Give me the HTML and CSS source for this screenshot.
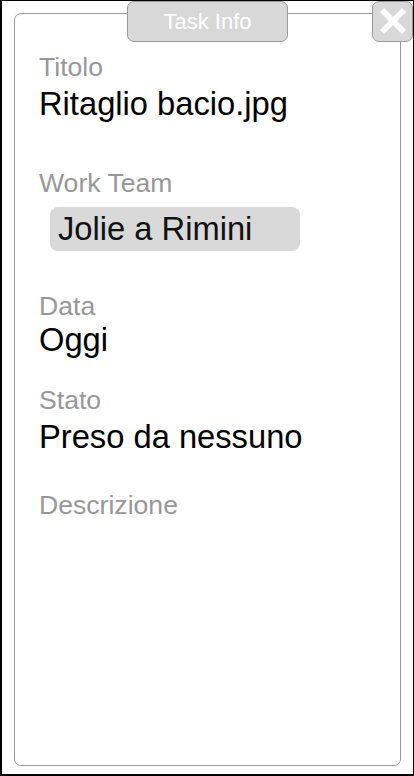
FILE: index.html
```html
<!DOCTYPE html>
<html lang="it">
<head>
<meta charset="utf-8">
<title>Task Info</title>
<link rel="stylesheet" href="styles.css">
</head>
<body>
<div class="frame">
  <div class="panel">
    <div class="label label-first">Titolo</div>
    <div class="value">Ritaglio bacio.jpg</div>

    <div class="label label-team">Work Team</div>
    <div class="chip">Jolie a Rimini</div>

    <div class="label label-data">Data</div>
    <div class="value value-tight">Oggi</div>

    <div class="label label-stato">Stato</div>
    <div class="value">Preso da nessuno</div>

    <div class="label label-desc">Descrizione</div>
  </div>
  <div class="tab">Task Info</div>
  <button class="close" type="button" aria-label="Chiudi">
    <svg width="39" height="39" viewBox="0 0 39 39" aria-hidden="true">
      <path d="M9 8 L31 30 M31 8 L9 30" stroke="#ffffff" stroke-width="6" fill="none"/>
    </svg>
  </button>
</div>
</body>
</html>
```

FILE: styles.css
```css
html, body {
  margin: 0;
  padding: 0;
  background: #ffffff;
}

body {
  font-family: "Liberation Sans", Arial, Helvetica, sans-serif;
}

.frame {
  position: relative;
  box-sizing: border-box;
  width: 414px;
  height: 776px;
  border-style: solid;
  border-color: #000000;
  border-width: 1px 1px 2px 2px;
  padding: 12px 12px 8px 12px;
}

.panel {
  box-sizing: border-box;
  height: 100%;
  border: 1px solid #9a9a9a;
  border-radius: 7px;
  padding: 38px 20px 0 24px;
}

.label {
  font-size: 26.6px;
  line-height: 30px;
  color: #989898;
}

.label-team { margin-top: 45px; }
.label-data { margin-top: 40px; }
.label-stato { margin-top: 26px; }
.label-desc { margin-top: 34px; }

.value {
  margin-top: 3px;
  font-size: 32.7px;
  line-height: 38px;
  color: #000000;
}

.value-tight { margin-top: 0; }

.chip {
  box-sizing: border-box;
  width: 250px;
  height: 44px;
  margin: 9px 0 0 11px;
  padding-left: 8px;
  border-radius: 8px;
  background: #d9d9d9;
  font-size: 32.7px;
  line-height: 44px;
  color: #111111;
}

.tab {
  position: absolute;
  top: 0;
  left: 125px;
  box-sizing: border-box;
  width: 161px;
  height: 41px;
  border: 1px solid #9a9a9a;
  border-radius: 7px;
  background: #d8d8d8;
  color: #ffffff;
  font-size: 22px;
  line-height: 39px;
  text-align: center;
}

.close {
  position: absolute;
  top: 0;
  right: 0;
  box-sizing: border-box;
  width: 41px;
  height: 41px;
  margin: 0;
  padding: 0;
  border: 1px solid #9a9a9a;
  border-radius: 7px;
  background: #d8d8d8;
  display: flex;
  align-items: center;
  justify-content: center;
}

.close svg {
  display: block;
}
```
